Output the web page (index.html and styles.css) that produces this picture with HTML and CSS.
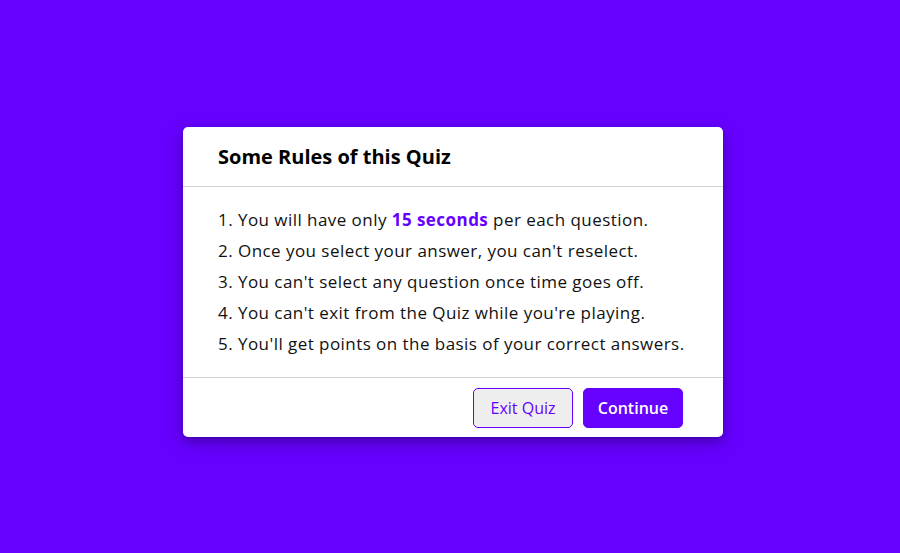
FILE: index.html
```
<!DOCTYPE html>
<html lang="en">
<head>
<meta charset="utf-8">
<title>Quiz Rules</title>
<link rel="stylesheet" href="styles.css">
</head>
<body>
<div class="info-box">
  <div class="info-title">Some Rules of this Quiz</div>
  <div class="info-list">
    <div class="info">1. You will have only <span class="hl">15 seconds</span> per each question.</div>
    <div class="info">2. Once you select your answer, you can't reselect.</div>
    <div class="info">3. You can't select any question once time goes off.</div>
    <div class="info">4. You can't exit from the Quiz while you're playing.</div>
    <div class="info">5. You'll get points on the basis of your correct answers.</div>
  </div>
  <div class="buttons">
    <button class="btn quit">Exit Quiz</button>
    <button class="btn restart">Continue</button>
  </div>
</div>
</body>
</html>
```
FILE: styles.css
```
* { box-sizing: border-box; margin: 0; padding: 0; }
html, body { height: 100%; }
body {
  background: #6600ff;
  font-family: "Open Sans", "Noto Sans", sans-serif;
  display: flex;
  align-items: center;
  justify-content: center;
  padding: 11px 0 0 6px;
}
.info-box {
  width: 540px;
  background: #fff;
  border-radius: 5px;
  box-shadow: 0 4px 8px 0 rgba(0,0,0,0.2), 0 6px 20px 0 rgba(0,0,0,0.19);
}
.info-title {
  height: 60px;
  display: flex;
  align-items: center;
  padding: 0 35px;
  border-bottom: 1px solid lightgrey;
  font-size: 20px;
  font-weight: 700;
  color: #000;
}
.info-list { padding: 15px 35px; }
.info {
  margin: 5px 0;
  font-size: 17px;
  line-height: 26px;
  letter-spacing: 0.45px;
  color: #111;
}
.hl { color: #6600ff; font-weight: 700; }
.buttons {
  height: 60px;
  display: flex;
  align-items: center;
  justify-content: flex-end;
  padding: 0 35px;
  border-top: 1px solid lightgrey;
}
.btn {
  margin: 0 5px;
  height: 40px;
  width: 100px;
  font-family: inherit;
  font-size: 16px;
  font-weight: 600;
  border-radius: 5px;
  border: 1px solid #6600ff;
}
.quit { background: #eeeeee; color: #6600ff; font-weight: 500; }
.restart { background: #6600ff; color: #fff; }
```
